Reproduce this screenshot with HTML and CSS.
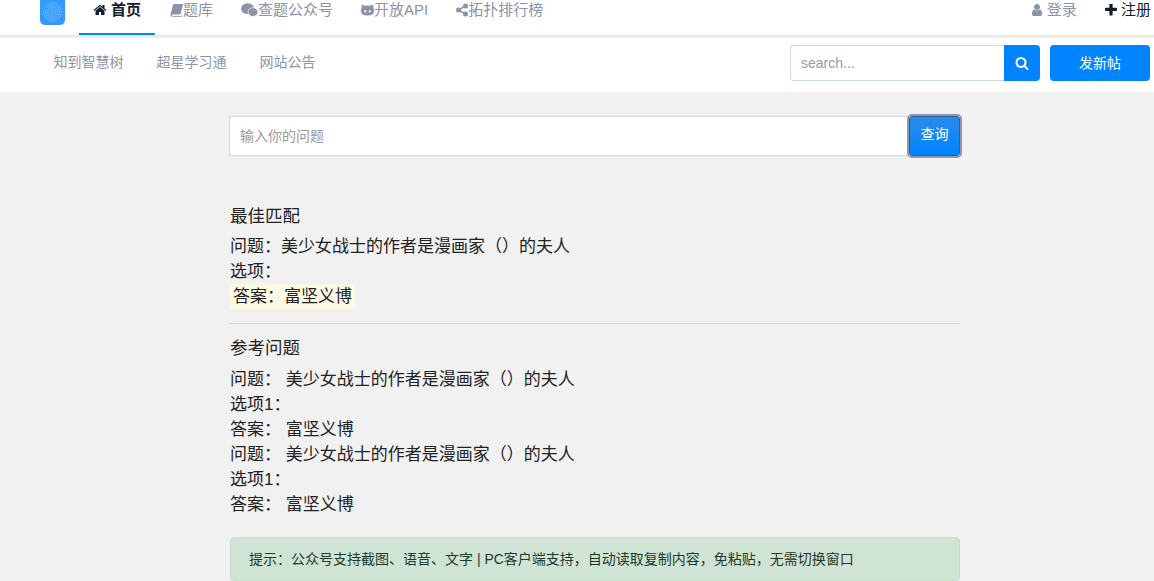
FILE: index.html
```html
<!doctype html>
<html lang="zh-CN">
<head>
<meta charset="utf-8">
<title>首页</title>
<link rel="stylesheet" href="styles.css">
</head>
<body>

<header class="topbar">
	<svg class="logo" viewBox="0 0 25 25">
		<rect x="0" y="-6" width="25" height="31" rx="5" fill="#3399ff"/>
		<g fill="none" stroke="#a9d3f7" stroke-width="1" stroke-dasharray="1 1">
			<circle cx="12.500" cy="12" r="9"/>
			<circle cx="12.500" cy="12" r="7"/>
			<circle cx="12.500" cy="12" r="5"/>
			<circle cx="12.500" cy="12" r="3"/>
			<circle cx="12.500" cy="12" r="1"/>
		</g>
	</svg>
	<nav class="mainnav">
		<a class="active"><svg class="ico home" viewBox="0 0 1792 1792"><path d="M1472 992v480q0 26-19 45t-45 19h-384v-384h-256v384h-384q-26 0-45-19t-19-45v-480q0-1 .5-3t.5-3l575-474 575 474q1 2 1 6zm223-69l-62 74q-8 9-21 11h-3q-13 0-21-7l-692-577-692 577q-12 8-24 7-13-2-21-11l-62-74q-8-10-7-23.500t11-21.500l719-599q32-26 76-26t76 26l244 204v-195q0-14 9-23t23-9h192q14 0 23 9t9 23v408l219 182q10 8 11 21.500t-7 23.500z"/></svg><b>首页</b></a>
		<a><svg class="ico" viewBox="0 0 14 14"><path d="M4 .5h9.500q.8 0 .5 1l-2.500 9.500q-.2.800-1 .8h-7.500q-1 0-.7 1t1 .7h8.700l.4-.9 1 .2-.8 1.500h-10q-2 0-2-2.300 0-.7.300-1.500l2.300-9q.3-1 1.300-1z"/></svg>题库</a>
		<a><svg class="ico wide" viewBox="0 0 18 15"><ellipse cx="7" cy="6" rx="7" ry="5.800"/><ellipse cx="12.700" cy="9.700" rx="5.300" ry="4.700" stroke="#fff" stroke-width=".7"/></svg>查题公众号</a>
		<a><svg class="ico" viewBox="0 0 14 14"><path d="M1 1l3 1.500q3-.7 6 0l3-1.500.5 4q.5 1 .5 3 0 5-7 5t-7-5q0-2 .5-3z"/><circle cx="4.500" cy="8.500" r="1.200" fill="#fff"/><circle cx="9.500" cy="8.500" r="1.200" fill="#fff"/></svg>开放API</a>
		<a><svg class="ico narrow" viewBox="0 0 12 14"><circle cx="2.500" cy="7" r="2.500"/><circle cx="9.500" cy="3" r="2.500"/><circle cx="9.500" cy="11" r="2.500"/><path d="M2.500 7l7-4M2.500 7l7 4" stroke="#8a93a8" stroke-width="1.500"/></svg>拓扑排行榜</a>
	</nav>
	<div class="usernav">
		<a><svg class="ico" viewBox="256 128 1280 1536"><path d="M1536 1399q0 109-62.500 187t-150.500 78h-854q-88 0-150.500-78t-62.500-187q0-85 8.500-160.500t31.500-152 58.500-131 94-89 134.500-34.500q131 128 313 128t313-128q76 0 134.500 34.500t94 89 58.500 131 31.500 152 8.500 160.500zm-256-887q0 159-112.500 271.500t-271.500 112.500-271.500-112.500-112.500-271.500 112.500-271.500 271.500-112.500 271.500 112.500 112.500 271.500z"/></svg> 登录</a>
		<a class="dark"><svg class="ico" viewBox="192 192 1408 1408"><path d="M1600 736v192q0 40-28 68t-68 28h-416v416q0 40-28 68t-68 28h-192q-40 0-68-28t-28-68v-416h-416q-40 0-68-28t-28-68v-192q0-40 28-68t68-28h416v-416q0-40 28-68t68-28h192q40 0 68 28t28 68v416h416q40 0 68 28t28 68z"/></svg> 注册</a>
	</div>
</header>

<div class="subbar">
	<nav class="subnav">
		<a>知到智慧树</a>
		<a>超星学习通</a>
		<a>网站公告</a>
	</nav>
	<form class="search">
		<input type="text" placeholder="search...">
		<button type="button"><svg viewBox="0 0 1792 1792"><path d="M1216 832q0-185-131.500-316.500t-316.500-131.500-316.500 131.500-131.500 316.500 131.500 316.500 316.500 131.500 316.500-131.500 131.500-316.500zm512 832q0 52-38 90t-90 38q-54 0-90-38l-343-342q-179 124-399 124-143 0-273.500-55.500t-225-150-150-225-55.500-273.500 55.500-273.500 150-225 225-150 273.500-55.500 273.500 55.500 225 150 150 225 55.500 273.500q0 220-124 399l343 343q37 37 37 90z"/></svg></button>
	</form>
	<a class="post-btn">发新帖</a>
</div>

<main class="content">
	<form class="ask">
		<input type="text" placeholder="输入你的问题">
		<button type="button">查询</button>
	</form>

	<section class="best">
		<h2>最佳匹配</h2>
		<p>问题&#xFF1A;美少女战士的作者是漫画家&#xFF08;&#xFF09;的夫人</p>
		<p>选项&#xFF1A;</p>
		<p><span class="hl">答案&#xFF1A;富坚义博</span></p>
	</section>

	<hr>

	<section>
		<h2>参考问题</h2>
		<p>问题&#xFF1A; 美少女战士的作者是漫画家&#xFF08;&#xFF09;的夫人</p>
		<p>选项1&#xFF1A;</p>
		<p>答案&#xFF1A; 富坚义博</p>
		<p>问题&#xFF1A; 美少女战士的作者是漫画家&#xFF08;&#xFF09;的夫人</p>
		<p>选项1&#xFF1A;</p>
		<p>答案&#xFF1A; 富坚义博</p>
	</section>

	<div class="tip">提示&#xFF1A;公众号支持截图、语音、文字 | PC客户端支持&#xFF0C;自动读取复制内容&#xFF0C;免粘贴&#xFF0C;无需切换窗口</div>
</main>

</body>
</html>
```

FILE: styles.css
```css
* {
	box-sizing: border-box;
}
html, body {
	height: 100%;
	overflow: hidden;
}
body {
	margin: 0;
	background: #f1f1f1;
	color: #222;
	font-family: "Liberation Sans", "Noto Sans CJK SC", sans-serif;
}
a {
	text-decoration: none;
}

.topbar {
	display: flex;
	height: 37px;
	padding-left: 40px;
	background: #fff;
	border-bottom: 2px solid #e8e8e8;
}
.logo {
	display: block;
	width: 25px;
	height: 25px;
}
.mainnav {
	display: flex;
	margin-left: 14px;
}
.mainnav a {
	height: 35px;
	padding: 0 14px;
	color: #8a93a8;
	font-size: 15px;
	line-height: 20px;
	border-bottom: 2px solid transparent;
	white-space: nowrap;
}
.mainnav a.active {
	margin-right: 1px;
	color: #12202e;
	border-bottom-color: #0084ff;
}
.mainnav b {
	font-weight: bold;
}
.ico {
	display: inline-block;
	width: 13px;
	height: 14px;
	vertical-align: -2px;
	fill: currentColor;
}
.ico.wide {
	width: 17px;
}
.ico.narrow {
	width: 12px;
}
.ico.home {
	width: 14px;
	margin-right: 4px;
}
.usernav {
	display: flex;
	gap: 28px;
	margin-left: auto;
	padding-right: 3px;
	font-size: 15px;
	line-height: 20px;
}
.usernav a {
	color: #8a93a8;
	white-space: nowrap;
}
.usernav a.dark {
	color: #12202e;
}
.usernav .ico {
	width: 12px;
	height: 12px;
	vertical-align: -1px;
}

.subbar {
	display: flex;
	align-items: center;
	height: 54px;
	margin-top: 1px;
	padding: 0 4px 4px 37px;
	background: #fff;
}
.subnav {
	display: flex;
	margin-bottom: 5px;
}
.subnav a {
	padding: 0 16.500px;
	color: #8a95a8;
	font-size: 14px;
}
.search {
	display: flex;
	margin-left: auto;
}
.search input {
	width: 214px;
	height: 36px;
	padding: 0 10px;
	border: 1px solid #c9dbe6;
	border-right: 0;
	border-radius: 4px 0 0 4px;
	font: 14px "Liberation Sans", sans-serif;
}
.search input::placeholder,
.ask input::placeholder {
	color: #999;
	opacity: 1;
}
.search button {
	width: 36px;
	height: 36px;
	padding: 0;
	border: 0;
	border-radius: 0 4px 4px 0;
	background: #0084ff;
}
.search svg {
	display: block;
	width: 14px;
	height: 14px;
	margin: auto;
	fill: #fff;
}
.post-btn {
	width: 100px;
	height: 36px;
	margin-left: 10px;
	border-radius: 4px;
	background: #0084ff;
	color: #fff;
	font-size: 14px;
	line-height: 36px;
	text-align: center;
}

.content {
	width: 732px;
	margin-left: 229px;
}
.ask {
	display: flex;
	align-items: center;
	height: 44px;
	margin-top: 22px;
}
.ask input {
	width: 680px;
	height: 40px;
	padding: 0 10px;
	border: 1px solid #cfdde4;
	border-right: 0;
	background: #fff;
	font: 14px "Liberation Sans", "Noto Sans CJK SC", sans-serif;
}
.ask button {
	width: 51px;
	height: 40px;
	padding: 0 0 7px;
	border: 1px solid #2a5f9f;
	outline: 2px solid #9195a6;
	border-radius: 3px;
	background: linear-gradient(#2c8ae8, #0084ff);
	color: #fff;
	font: 14px "Liberation Sans", "Noto Sans CJK SC", sans-serif;
}

section {
	padding-left: 1px;
	font-size: 17px;
	line-height: 25px;
}
section.best {
	margin-top: 46px;
}
h2 {
	margin: 0 0 6px;
	font-size: 17.500px;
	font-weight: normal;
	line-height: 25px;
}
.best h2 {
	margin-bottom: 5px;
}
p {
	margin: 0;
}
.hl {
	display: inline-block;
	padding: 0 3px;
	background: #fdf9e3;
}
hr {
	width: 731px;
	height: 1px;
	margin: 14px 0 12px;
	border: 0;
	background: #d8d8d8;
}
.tip {
	width: 730px;
	height: 44px;
	margin: 20px 0 0 1px;
	padding: 0 18px;
	border: 1px solid #c3e0cb;
	border-radius: 4px;
	background: #d0e4d6;
	color: #1f3a29;
	font-size: 14px;
	line-height: 42px;
}
```
